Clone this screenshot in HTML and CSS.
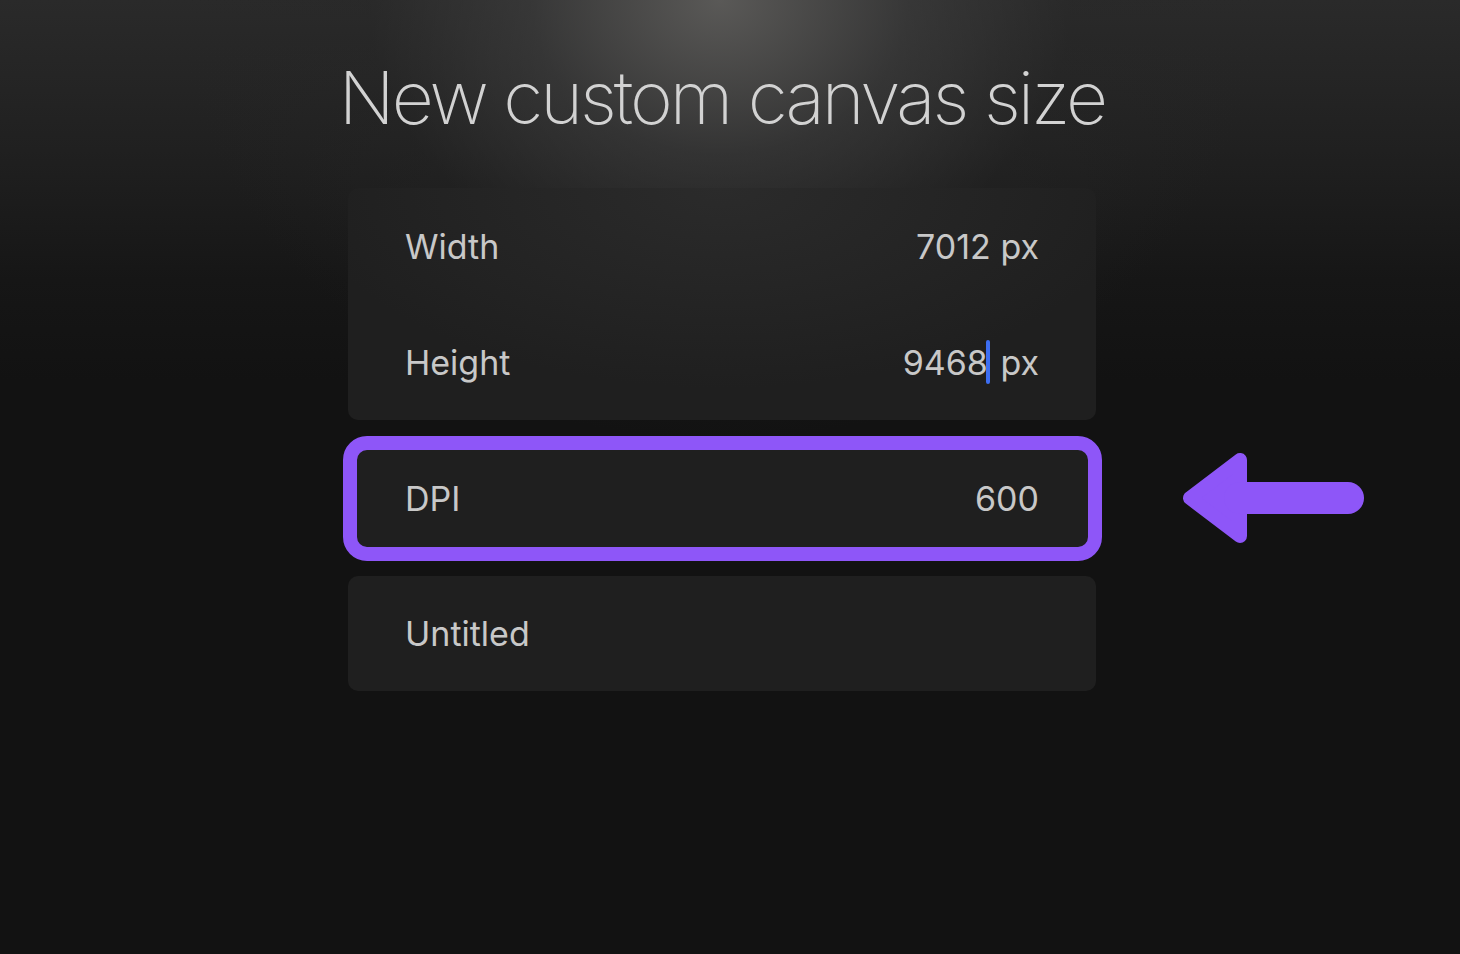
FILE: index.html
```html
<!DOCTYPE html>
<html lang="en">
<head>
    <meta charset="UTF-8">
    <meta name="viewport" content="width=device-width, initial-scale=1.0">
    <title>New custom canvas size</title>
    <link rel="stylesheet" href="styles.css">
</head>
<body>

<div class="container">
    <h1>New custom canvas size</h1>

    <div class="card card-size">
        <div class="row">
            <span class="label">Width</span>
            <span class="value">7012 px</span>
        </div>
        <div class="row">
            <span class="label">Height</span>
            <span class="value">9468<span class="caret"></span> px</span>
        </div>
    </div>

    <div class="card card-dpi">
        <div class="row">
            <span class="label">DPI</span>
            <span class="value">600</span>
        </div>
        <svg class="arrow" width="182" height="92" viewBox="0 0 182 92">
            <polygon points="8,46 58,8 58,84" fill="#8e56f8" stroke="#8e56f8" stroke-width="14" stroke-linejoin="round"/>
            <line x1="58" y1="46" x2="166" y2="46" stroke="#8e56f8" stroke-width="32" stroke-linecap="round"/>
        </svg>
    </div>

    <div class="card card-name">
        <div class="row">
            <span class="label">Untitled</span>
        </div>
    </div>
</div>

</body>
</html>
```

FILE: styles.css
```css
body {
    margin: 0;
    height: 954px;
    overflow: hidden;
    font-family: Inter, "Noto Sans", sans-serif;
    color: #c8c8c8;
    background-color: #121212;
    background-image:
        radial-gradient(ellipse 540px 440px at 720px 0, rgba(95, 94, 92, 0.9) 0%, rgba(64, 64, 64, 0.6) 35%, rgba(40, 40, 40, 0.3) 65%, rgba(30, 30, 30, 0) 100%),
        linear-gradient(to bottom, #2a2a2a 0, #202020 150px, #161616 280px, #121212 380px);
}
.container {
    width: 748px;
    margin-left: 348px;
    display: flex;
    flex-direction: column;
}
h1 {
    margin: 52px -60px 44px;
    font-size: 73px;
    font-weight: 200;
    line-height: 92px;
    text-align: center;
    color: #d2d2d2;
    letter-spacing: -3px;
    white-space: nowrap;
}
.card {
    background-color: #1f1f1f;
    border-radius: 10px;
    position: relative;
}
.card-size {
    background-image: radial-gradient(ellipse 420px 200px at 50% 0, #2b2b2b 0%, #1f1f1f 100%);
    margin-bottom: 24px;
}
.row {
    height: 116px;
    padding: 0 57px;
    display: flex;
    justify-content: space-between;
    align-items: center;
    font-size: 34px;
}
.card-dpi {
    margin-bottom: 24px;
}
.card-dpi .row {
    height: 108px;
}
.card-dpi::after {
    content: "";
    position: absolute;
    top: -8px;
    bottom: -9px;
    left: -5px;
    right: -6px;
    border: 14px solid #8e56f8;
    border-radius: 24px;
}
.card-name .row {
    height: 115px;
}
.caret {
    display: inline-block;
    width: 4px;
    height: 44px;
    margin-left: -2px;
    margin-right: 1px;
    background-color: #3d6ef2;
    border-radius: 2px;
    vertical-align: -9px;
}
.arrow {
    position: absolute;
    left: calc(100% + 86px);
    top: 8px;
}
```
